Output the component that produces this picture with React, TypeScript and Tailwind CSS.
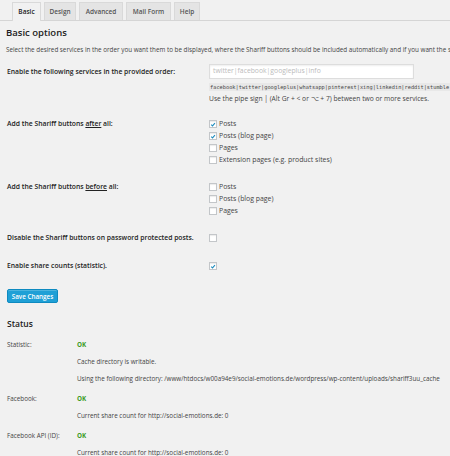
import React from 'react';

const tabs = [
  { name: 'Basic', w: 'w-[29px]', active: true },
  { name: 'Design', w: 'w-[32px]' },
  { name: 'Advanced', w: 'w-[44px]' },
  { name: 'Mail Form', w: 'w-[45px]' },
  { name: 'Help', w: 'w-[26px]' },
];

function Check({ checked }: { checked?: boolean }) {
  return (
    <span className="flex h-[8px] w-[8px] shrink-0 items-center justify-center border border-[#c3c6c9] bg-white shadow-[inset_0_1px_1px_rgba(0,0,0,0.08)]">
      {checked && (
        <svg viewBox="0 0 10 10" className="h-[7px] w-[7px]">
          <path d="M2 5.2 L4.2 7.3 L8.2 2.6" fill="none" stroke="#1e8cbe" strokeWidth="1.8" />
        </svg>
      )}
    </span>
  );
}

function CheckRow({ label, checked }: { label: string; checked?: boolean }) {
  return (
    <div className="flex h-[12px] items-center gap-[2px]">
      <Check checked={checked} />
      <span className="text-[6.9px]">{label}</span>
    </div>
  );
}

function StatusGroup({ label, lines, first }: { label: string; lines: string[]; first?: boolean }) {
  return (
    <div className={`flex ${first ? '' : 'mt-[3px]'}`}>
      <div className="w-[77px] shrink-0 pl-[7px] leading-[17px]">{label}</div>
      <div>
        <div className="h-[17px] leading-[17px] font-bold text-[#3c9b26]">OK</div>
        {lines.map((l) => (
          <div key={l} className="h-[17px] leading-[17px]">{l}</div>
        ))}
      </div>
    </div>
  );
}

export default function App() {
  return (
    <div
      className="h-[456px] w-[450px] overflow-hidden whitespace-nowrap bg-[#f1f1f1] text-[6.3px] text-[#444]"
      style={{ fontFamily: '"Open Sans", "Noto Sans", sans-serif' }}
    >
      {/* tabs */}
      <div className="flex h-[21px] items-end gap-[3px] border-b border-[#d5d5d5] pl-[12px]">
        {tabs.map((t) => (
          <div
            key={t.name}
            className={`${t.w} flex h-[18px] items-center justify-center border border-b-0 border-[#d9d9d9] text-[6.5px] font-semibold ${
              t.active ? '-mb-px h-[19px] bg-[#f1f1f1] text-[#222]' : 'bg-[#e4e4e4] text-[#555]'
            }`}
          >
            {t.name}
          </div>
        ))}
      </div>

      <h2 className="mt-[6px] pl-[6px] text-[9.5px] leading-[12px] font-semibold text-[#222]">Basic options</h2>
      <p className="mt-[6px] pl-[6px] leading-[10px]">
        Select the desired services in the order you want them to be displayed, where the Shariff buttons should be included automatically and if you want the s
      </p>

      {/* services */}
      <div className="mt-[9px] flex">
        <div className="w-[209px] shrink-0 pt-[3px] pl-[7px] text-[6.8px] leading-[10px] font-semibold text-[#222]">
          Enable the following services in the provided order:
        </div>
        <div className="min-w-0 overflow-hidden">
          <div className="flex h-[15px] w-[205px] items-center border border-[#ddd] bg-white pl-[3px] text-[6.8px] text-[#bbb] shadow-[inset_0_1px_2px_rgba(0,0,0,0.07)]">
            twitter|facebook|googleplus|info
          </div>
          <div className="mt-[4px] inline-block bg-[#e8e8e8] px-[1px] text-[5.3px] leading-[8px]" style={{ fontFamily: '"DejaVu Sans Mono", monospace' }}>
            facebook|twitter|googleplus|whatsapp|pinterest|xing|linkedin|reddit|stumble
          </div>
          <div className="mt-[3px] text-[6.7px] leading-[10px]">
            Use the pipe sign | (Alt Gr + &lt; or ⌥ + 7) between two or more services.
          </div>
        </div>
      </div>

      {/* after */}
      <div className="mt-[14px] flex">
        <div className="w-[209px] shrink-0 pt-[1px] pl-[7px] text-[6.8px] leading-[10px] font-semibold text-[#222]">
          Add the Shariff buttons <span className="underline">after</span> all:
        </div>
        <div>
          <CheckRow label="Posts" checked />
          <CheckRow label="Posts (blog page)" checked />
          <CheckRow label="Pages" />
          <CheckRow label="Extension pages (e.g. product sites)" />
        </div>
      </div>

      {/* before */}
      <div className="mt-[15px] flex">
        <div className="w-[209px] shrink-0 pt-[1px] pl-[7px] text-[6.8px] leading-[10px] font-semibold text-[#222]">
          Add the Shariff buttons <span className="underline">before</span> all:
        </div>
        <div>
          <CheckRow label="Posts" />
          <CheckRow label="Posts (blog page)" />
          <CheckRow label="Pages" />
        </div>
      </div>

      <div className="mt-[16px] flex h-[10px] items-center">
        <div className="w-[209px] shrink-0 pl-[7px] text-[6.8px] font-semibold text-[#222]">Disable the Shariff buttons on password protected posts.</div>
        <Check />
      </div>

      <div className="mt-[18px] flex h-[10px] items-center">
        <div className="w-[209px] shrink-0 pl-[7px] text-[6.8px] font-semibold text-[#222]">Enable share counts (statistic).</div>
        <Check checked />
      </div>

      <div className="mt-[18px] pl-[7px]">
        <button className="flex h-[14px] w-[51px] items-center justify-center rounded-[2px] border border-[#0e8ac0] bg-[#1fa0d6] text-[6.3px] font-semibold text-white shadow-[inset_0_1px_0_rgba(120,200,230,0.5)]">
          Save Changes
        </button>
      </div>

      <h2 className="mt-[15px] pl-[7px] text-[8.5px] leading-[12px] font-semibold text-[#222]">Status</h2>

      <div className="mt-[6px]">
        <StatusGroup
          first
          label="Statistic:"
          lines={[
            'Cache directory is writable.',
            'Using the following directory: /www/htdocs/w00a94e9/social-emotions.de/wordpress/wp-content/uploads/shariff3uu_cache',
          ]}
        />
        <StatusGroup label="Facebook:" lines={['Current share count for http://social-emotions.de: 0']} />
        <StatusGroup label="Facebook API (ID):" lines={['Current share count for http://social-emotions.de: 0']} />
      </div>
    </div>
  );
}
